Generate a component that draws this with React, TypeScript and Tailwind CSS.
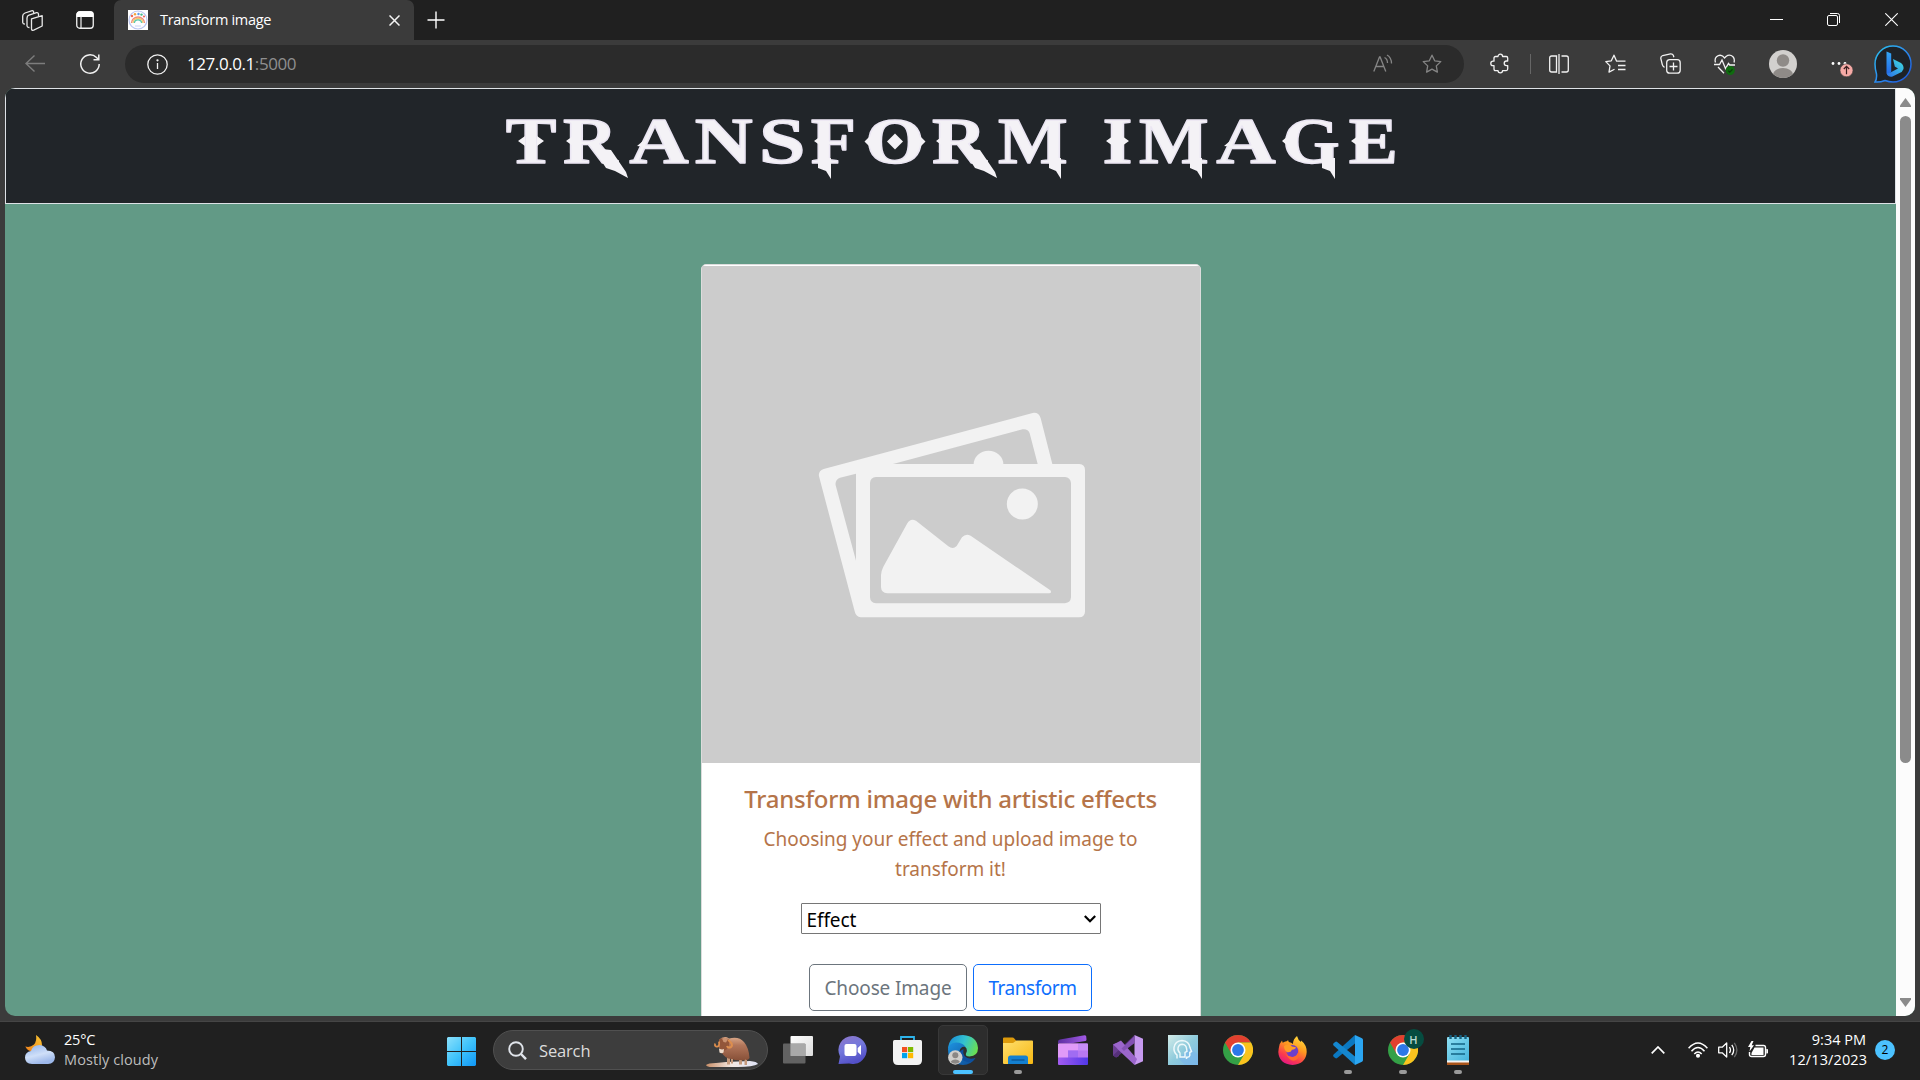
import React from "react";

const UI = "font-['Open_Sans','Noto_Sans',sans-serif]";

/* ---------- Title lettering ---------- */

// Horizontal ink bounds of each capital, in 1/1000 em.
const INK: Record<string, [number, number]> = {
  T: [31, 636],
  R: [26, 715],
  A: [9, 689],
  N: [16, 701],
  S: [35, 514],
  F: [16, 583],
  O: [35, 743],
  M: [14, 921],
  I: [20, 370],
  G: [37, 755],
  E: [16, 641],
};

const LETTERS: [string, number, number][] = [
  ["T", 507, 553],
  ["R", 564, 616],
  ["A", 629, 685],
  ["N", 695, 750],
  ["S", 761, 801],
  ["F", 811, 853],
  ["O", 867, 921],
  ["R", 933, 985],
  ["M", 998, 1065],
  ["I", 1103, 1130],
  ["M", 1139, 1206],
  ["A", 1216, 1272],
  ["G", 1284, 1337],
  ["E", 1349, 1395],
];

function Wordmark() {
  const size = 65;
  return (
    <svg width="900" height="90" viewBox="500 105 900 90" className="block" role="img" aria-label="Transform image">
      <g fill="#f4f2f6" stroke="#ebe6f3" strokeWidth="1.300" strokeLinejoin="round">
        {LETTERS.map(([ch, x0, x1], i) => {
          const [a, b] = INK[ch];
          const sx = (x1 - x0) / (((b - a) * size) / 1000);
          const tx = x0 - (a * size * sx) / 1000;
          return (
            <text
              key={i}
              transform={`translate(${tx} 163.300) scale(${sx} 1)`}
              fontFamily="'Liberation Serif', serif"
              fontWeight="700"
              fontSize={size}
            >
              {ch}
            </text>
          );
        })}
      </g>
      <g fill="#f4f2f6">
        <path d="M517 141l7-5v10zM543 141l-7-5v10z" />
        <path d="M565 141l7-5v10zM935 141l7-5v10zM1350 141l7-5v10z" />
        <path d="M636 146l6-5 3 6zM1223 146l6-5 3 6z" />
        <path d="M592 148l13 20 9 3 13 7-2-6-15-22zM961 148l13 20 9 3 13 7-2-6-15-22z" />
        <path d="M813 141l7-5v10zM817 158h13v21l-5-8-8-3z" />
        <path d="M863.500 141.500l6-6v12zM924.500 141.500l-6-6v12z" />
        <path d="M886 141.500l8-8 8 8-8 8z" />
        <path d="M1048 158h12v21l-5-8-7-3zM1189 158h12v21l-5-8-7-3zM1321 158h13v21l-5-8-8-3z" />
        <path d="M1105 141l7-5v10zM1128 141l-7-5v10zM1281 141l7-6v12z" />
      </g>
    </svg>
  );
}

/* ---------- Browser chrome ---------- */

function TabStrip() {
  return (
    <div className="flex h-10 items-start bg-[#202020]">
      <div className="flex h-10 w-[114px] items-center rounded-br-[6px] pl-[22px]">
        <svg width="21" height="21" viewBox="0 0 21 21" fill="none" stroke="#e8e8e8" strokeWidth="1.3" strokeLinejoin="round">
          <path d="M9.500 8.800 20.200 5.700V16l-8.500 4.200q-2.200.6-2.200-1.500z" />
          <path d="M16.500 6V3.800q-.4-1.500-2-1.100L7 5.200Q5 6 5 8v8q.3 1.700 2.500 1.500" />
          <path d="M11.600 3V1.800Q11 .4 9.500.8L3 3Q.7 4 .7 6v6.500q.2 1.600 2.300 1.700" />
        </svg>
        <svg className="ml-[33px]" width="18" height="18" viewBox="0 0 18 18">
          <rect x=".75" y=".75" width="16.500" height="16.500" rx="3" fill="none" stroke="#f2f2f2" strokeWidth="1.300" />
          <path d="M.5 6V3.500A3 3 0 0 1 3.500.5h11a3 3 0 0 1 3 3V6z" fill="#fff" />
          <path d="M5 5v12" stroke="#f2f2f2" strokeWidth="1.200" />
        </svg>
      </div>
      <div className="flex h-10 w-[300px] items-center rounded-t-[7px] bg-[#3b3b3b] pl-[14px] pr-[14px]">
        <svg width="20" height="20" viewBox="0 0 20 20">
          <rect width="20" height="20" fill="#fff" />
          <circle cx="10" cy="10" r="9" fill="#fdfdff" stroke="#b9c4f0" strokeWidth="1.200" />
          <path d="M3.500 13a6.500 6 0 0 1 13 0" fill="none" stroke="#f08a7c" strokeWidth="1.400" />
          <path d="M5 13a5 4.500 0 0 1 10 0" fill="none" stroke="#f5c86a" strokeWidth="1.300" />
          <path d="M6.400 13a3.600 3.200 0 0 1 7.200 0" fill="none" stroke="#58c7ae" strokeWidth="1.300" />
          <circle cx="4" cy="6" r="1.200" fill="#f0674f" />
          <circle cx="7" cy="4.300" r="1.200" fill="#f3a43c" />
          <circle cx="10.500" cy="4" r="1.200" fill="#5b9bea" />
          <circle cx="13.500" cy="4.600" r="1.200" fill="#48bd8a" />
          <circle cx="16" cy="6.500" r="1.100" fill="#ef6a5a" />
          <path d="M7 16h6" stroke="#c9d2f2" />
        </svg>
        <span className="ml-[12px] text-[14.500px] leading-5 tracking-[-0.300px] text-white">Transform image</span>
        <svg className="ml-auto" width="11" height="11" viewBox="0 0 11 11" stroke="#f4f4f4" strokeWidth="1.500">
          <path d="M.5.500l10 10M10.500.500l-10 10" />
        </svg>
      </div>
      <div className="flex h-10 items-center pb-px pl-[13px]">
        <svg width="18" height="18" viewBox="0 0 18 18" stroke="#fff" strokeWidth="1.400">
          <path d="M9 .500v17M.500 9h17" />
        </svg>
      </div>
      <div className="ml-auto flex h-10 items-center pr-[22px] pb-px">
        <svg width="13" height="13" viewBox="0 0 13 13" stroke="#fff">
          <path d="M0 6.500h13" />
        </svg>
        <svg className="ml-[44px]" width="13" height="13" viewBox="0 0 13 13" fill="none" stroke="#fff">
          <rect x=".5" y="2.500" width="10" height="10" rx="1.500" />
          <path d="M3 .500h7.500q2 0 2 2V10" />
        </svg>
        <svg className="ml-[45px]" width="13" height="13" viewBox="0 0 13 13" stroke="#fff" strokeWidth="1.100">
          <path d="M.3.300l12.400 12.400M12.700.300.3 12.700" />
        </svg>
      </div>
    </div>
  );
}

const STAR = "M10 1.200l2.700 5.600 6.100.8-4.500 4.300 1.100 6.200L10 15.100l-5.400 3 1.100-6.200L1.200 7.600l6.100-.8z";

function Toolbar() {
  return (
    <div className="flex h-12 items-center bg-[#3b3b3b]">
      <div className="flex w-[125px] items-center pl-[25px]">
        <svg width="20" height="18" viewBox="0 0 20 18" fill="none" stroke="#7d7d7d" strokeWidth="1.400">
          <path d="M20 8.500H1M9.500.500 1 8.500l8.500 8" />
        </svg>
        <svg className="ml-[35px]" width="20" height="20" viewBox="0 0 20 20" fill="none" stroke="#f2f2f2" strokeWidth="1.500">
          <path d="M19.200 10A9.200 9.200 0 1 1 16.500 3.500L18.500 5.500" />
          <path d="M18.800.500V5.700H13.500" />
        </svg>
      </div>
      <div className="flex h-[38px] w-[1339px] items-center rounded-full bg-[#2b2b2b] pl-[22px] pr-[22px]">
        <svg width="21" height="21" viewBox="0 0 21 21" fill="none" stroke="#f2f2f2" strokeWidth="1.300">
          <circle cx="10.500" cy="10.500" r="9.700" />
          <path d="M10.500 9v6" />
          <circle cx="10.500" cy="6.300" r=".5" fill="#fff" />
        </svg>
        <span className="ml-[19px] text-[17px] leading-6 tracking-[-0.430px] text-white">
          127.0.0.1<span className="text-[#8f8f8f]">:5000</span>
        </span>
        <svg className="mb-0.5 ml-auto" width="20" height="19" viewBox="0 0 20 19" fill="none" stroke="#858585" strokeWidth="1.300">
          <path d="M.8 17.500 6.500 3h.6l5.700 14.500M3 12.500h7.700" />
          <path d="M11.500 3.500q3 1.500 3 5.500M14 1q4.500 2.500 4.500 8.500" />
        </svg>
        <svg className="ml-[29px]" width="20" height="20" viewBox="0 0 20 20" fill="none" stroke="#858585" strokeWidth="1.300" strokeLinejoin="round">
          <path d={STAR} />
        </svg>
      </div>
      <div className="ml-2 flex items-center">
        <div className="flex w-14 justify-center pb-px">
          <svg width="20" height="21" viewBox="0 0 20 21" fill="none" stroke="#f2f2f2" strokeWidth="1.300" strokeLinejoin="round">
            <path d="M8 3.500a2.300 2.300 0 0 1 4.600 0h3.600q1.500 0 1.500 1.500v3h-1.200a2.300 2.300 0 0 0 0 4.600h1.200v3.500q0 1.500-1.500 1.500h-3.600a2.300 2.300 0 0 1-4.600 0H5.500Q4 17.600 4 16.100V12.600H3a2.200 2.200 0 0 1 0-4.400h1V5q0-1.500 1.500-1.500z" />
          </svg>
        </div>
        <div className="flex w-1 justify-center">
          <div className="h-5 w-px bg-[#666]" />
        </div>
        <div className="flex w-[54px] justify-center pb-px">
          <svg width="20" height="20" viewBox="0 0 20 20" fill="none" stroke="#f2f2f2" strokeWidth="1.300">
            <path d="M7.500 2H2.700Q.7 2 .7 4v12q0 2 2 2h4.800zM12.500 2h4.800q2 0 2 2v12q0 2-2 2h-4.800M10 0v20" />
          </svg>
        </div>
        <div className="flex w-[58px] justify-center pb-px">
          <svg width="21" height="20" viewBox="0 0 21 20" fill="none" stroke="#f2f2f2" strokeWidth="1.300" strokeLinejoin="round">
            <path d="M13 7.200 11.500 7 9 1.200 6.300 6.800.8 7.600l4.200 4.300-1 6.200L9.500 15.200M13 7.200h7.500M13 11.500h7.500M13 15.500h7.500" />
          </svg>
        </div>
        <div className="flex w-[52px] justify-center pb-px">
          <svg width="21" height="21" viewBox="0 0 21 21" fill="none" stroke="#f2f2f2" strokeWidth="1.300">
            <rect x="6.700" y="6.700" width="13.500" height="13.500" rx="3" />
            <path d="M13.500 9.500v8M9.500 13.500h8M4.500 14.300Q2.700 13.500 2.300 11.700L.8 5.500Q.6 3.300 2.700 2.500L10.500.800q2-.2 2.800 1.500l.6 1.900" />
          </svg>
        </div>
        <div className="flex w-[58px] justify-center">
          <svg width="22" height="21" viewBox="0 0 22 21" fill="none" stroke="#f2f2f2" strokeWidth="1.300">
            <path d="M1.500 8.500Q.3 5 2.500 2.800 6-.2 9.300 2.600L10.500 4 12 2.500q3.700-2.800 7 .3Q21 5 20 8.500M4 13l6 6.300" />
            <path d="M0 10.500h5.500L8 6l3.500 8.500 3-5 1.200 1.500H21" />
            <circle cx="16.300" cy="16.500" r="4.500" fill="#0f6b0f" stroke="none" />
            <path d="M14.300 16.600l1.500 1.500 2.700-2.800" stroke="#0a3d0a" />
          </svg>
        </div>
        <div className="flex w-[58px] justify-center">
          <svg width="28" height="28" viewBox="0 0 28 28">
            <defs>
              <clipPath id="avatarClip">
                <circle cx="14" cy="14" r="14" />
              </clipPath>
            </defs>
            <g clipPath="url(#avatarClip)">
              <rect width="28" height="28" fill="#d2d0ce" />
              <circle cx="14" cy="10.500" r="6.200" fill="#8f8b88" />
              <ellipse cx="14" cy="24.500" rx="10" ry="6.500" fill="#8f8b88" />
            </g>
          </svg>
        </div>
        <div className="flex w-[54px] justify-center">
          <svg width="27" height="26" viewBox="0 0 27 26">
            <g fill="#fff">
              <circle cx="7" cy="12.500" r="1.400" />
              <circle cx="13" cy="12.500" r="1.400" />
              <circle cx="19" cy="12.500" r="1.400" />
            </g>
            <circle cx="20" cy="19.500" r="6.500" transform="translate(.5 -.2)" fill="#f6aaa6" stroke="#3b3b3b" strokeWidth=".6" />
            <path d="M20.500 23.300v-8M17.800 18l2.700-2.700L23.200 18" stroke="#3b1f1f" fill="none" strokeWidth="1.200" />
          </svg>
        </div>
        <div className="flex w-[54px] justify-center">
          <svg width="38" height="38" viewBox="0 0 38 38">
            <defs>
              <linearGradient id="bingRing" x1="0" y1="0" x2="1" y2="1">
                <stop offset="0" stopColor="#2bc4ee" />
                <stop offset=".5" stopColor="#2b8cf0" />
                <stop offset="1" stopColor="#1b4fd8" />
              </linearGradient>
              <linearGradient id="bingB" x1="0" y1="0" x2="0" y2="1">
                <stop offset="0" stopColor="#34a6f4" />
                <stop offset="1" stopColor="#2267e6" />
              </linearGradient>
              <linearGradient id="bingS" x1="0" y1="1" x2="1" y2="0">
                <stop offset="0" stopColor="#2b6fe8" />
                <stop offset="1" stopColor="#3fe0e0" />
              </linearGradient>
            </defs>
            <path d="M1 37q2-3 1.500-8Q1 24 1 19A18 18 0 1 1 19 37q-4 0-8-1.500Q6 37.500 1 37z" fill="#1e2227" stroke="url(#bingRing)" strokeWidth="1.500" />
            <path d="M12.500 6.500l4.700 2v17.700l-2 4.500-2.700-2.500z" fill="url(#bingB)" />
            <path d="M19 14l8 4q3 2.300 2.500 6-1 3-4 4l-7 3.500q-4 1-6-3l3-.5 8.500-4.500-3.200-2z" fill="url(#bingS)" />
          </svg>
        </div>
      </div>
    </div>
  );
}

/* ---------- Page ---------- */

function PlaceholderPicture() {
  return (
    <svg className="block" width="498" height="497" viewBox="36 48 1494 1491">
      <rect x="36" y="48" width="1494" height="1491" fill="#ccc" />
      <g fill="#f2f2f2">
        <path
          fillRule="evenodd"
          d="M401 657 1028 489Q1046 486 1052 505L1087 642H1168Q1185 643 1185 660V1085Q1184 1101 1168 1102H512Q498 1101 494 1084L387 679Q384 663 401 657zM609 642H1043L1019 550Q1014 536 998 538zM498 671 450 683Q434 690 437 706L498 932zM558 681Q541 682 540 699V1042Q541 1059 558 1060H1125Q1142 1058 1143 1042V699Q1141 682 1125 681z"
        />
        <path d="M851 643a44 40 0 0 1 89 0z" />
        <circle cx="997" cy="762" r="46.500" />
        <path d="M652 820Q661 804 678 812L775 889Q789 899 800 888L816 862Q827 849 842 857L1081 1021Q1086 1028 1078 1030H592Q574 1029 573 1012V975Q574 962 580 950z" />
      </g>
    </svg>
  );
}

function Page() {
  return (
    <div className="mx-[5px] flex h-[928px] overflow-hidden rounded-[10px] bg-[#629a86]">
      <div className="flex w-[1891px] flex-col items-center">
        <header className="flex h-[116px] w-full shrink-0 justify-center border border-[#dee2e6] bg-[#212529] pt-4">
          <Wordmark />
        </header>
        <main className="mt-[60px] flex w-[500px] shrink-0 flex-col rounded-[5px] border border-[#dcdcdc] bg-white pt-px font-['Noto_Sans','Open_Sans',sans-serif]">
          <PlaceholderPicture />
          <div className="flex flex-col items-center pt-[21px] pb-10">
            <h5 className="whitespace-nowrap text-[24px] font-medium leading-[30px] tracking-[-0.230px] text-[#b57449]">
              Transform image with artistic effects
            </h5>
            <p className="mt-[10px] whitespace-nowrap text-center text-[19px] leading-[30px] tracking-[-0.040px] text-[#b57449]">
              Choosing your effect and upload image to
              <br />
              transform it!
            </p>
            <div className="mt-[19px] flex h-[31px] w-[300px] items-center justify-between rounded-[1px] border border-[#767676] bg-white pl-[5px] pr-[4px]">
              <span className="pt-0.5 text-[19px] leading-7 tracking-[-0.100px] text-black">Effect</span>
              <svg width="12" height="8" viewBox="0 0 12 8" fill="none" stroke="#000" strokeWidth="2.200">
                <path d="M.8 1 6 6.200 11.200 1" />
              </svg>
            </div>
            <div className="mt-[30px] flex gap-[6px] text-[19px] leading-7">
              <button className="h-[47px] w-[158px] whitespace-nowrap rounded-[5px] border border-[#6c757d] tracking-[-0.150px] text-[#6c757d]">
                Choose Image
              </button>
              <button className="h-[47px] w-[119px] whitespace-nowrap rounded-[5px] border border-[#0d6efd] tracking-[-0.450px] text-[#0d6efd]">
                Transform
              </button>
            </div>
          </div>
        </main>
      </div>
      <div className="flex w-[19px] flex-col items-center bg-[#fcfcfc] pt-[10px] pb-[9px]">
        <svg width="11" height="9" viewBox="0 0 11 9">
          <path d="M5.500 0 11 7.500V9H0V7.500z" fill="#8b8b8b" />
        </svg>
        <div className="mt-[9px] h-[647px] w-[11px] rounded-full bg-[#8b8b8b]" />
        <svg className="mt-auto" width="11" height="9" viewBox="0 0 11 9">
          <path d="M5.500 9 11 1.500V0H0v1.500z" fill="#8b8b8b" />
        </svg>
      </div>
    </div>
  );
}

/* ---------- Taskbar icons ---------- */

function Chrome() {
  return (
    <svg width="30" height="30" viewBox="0 0 30 30">
      <circle cx="15" cy="15" r="15" fill="#34a046" />
      <path d="M15 0a15 15 0 0 1 13 7.500H15L8.500 18.800 2 7.500A15 15 0 0 1 15 0z" fill="#e2402f" />
      <path d="M28 7.500A15 15 0 0 1 15 30l6.500-11.200L15 7.500z" fill="#fbc31e" />
      <circle cx="15" cy="15" r="7.500" fill="#fff" />
      <circle cx="15" cy="15" r="5.900" fill="#2c78e8" />
    </svg>
  );
}

function Edge() {
  return (
    <svg width="30" height="30" viewBox="0 0 30 30">
      <defs>
        <linearGradient id="edgeTop" x1="0" y1=".3" x2="1" y2=".6">
          <stop offset="0" stopColor="#1b8fd8" />
          <stop offset=".5" stopColor="#33c2d0" />
          <stop offset="1" stopColor="#6be04f" />
        </linearGradient>
        <linearGradient id="edgeLow" x1="0" y1="0" x2="1" y2="1">
          <stop offset="0" stopColor="#1e93e0" />
          <stop offset="1" stopColor="#0c4a94" />
        </linearGradient>
      </defs>
      <path d="M0 14Q1 0 15 0q14 1 15 13 0 8-8.500 8.500-4.500 0-3.500-3 3-6-4-8.500Q5 8 0 14z" fill="url(#edgeTop)" />
      <path d="M0 14q1-6 8-6.500 7 0 9.500 4.500-5-1-6 4.500Q11 25 20 26q4 0 7.500-3Q23 30 15 30 0 29 0 14z" fill="url(#edgeLow)" />
      <path d="M11.500 16.500Q11 26 20 27q4 0 7.500-4Q20 25 16.500 21q-2-3-1-7z" fill="#0d4f9e" />
      <circle cx="7.300" cy="22.500" r="7.200" fill="#d0cecb" />
      <circle cx="7.300" cy="20.300" r="3" fill="#8b8784" />
      <path d="M2.700 27a4.800 3.600 0 0 1 9.200 0 7 7 0 0 1-9.200 0z" fill="#8b8784" />
    </svg>
  );
}

const APPS: { name: string; running?: "active" | "idle"; icon: React.ReactNode }[] = [
  {
    name: "Task view",
    icon: (
      <svg width="30" height="28" viewBox="0 0 30 28">
        <defs>
          <linearGradient id="tv" x1="0" y1="0" x2="1" y2="1">
            <stop offset="0" stopColor="#fff" />
            <stop offset="1" stopColor="#dcdcdc" />
          </linearGradient>
        </defs>
        <rect x="7.500" width="22.500" height="20" rx="1" fill="url(#tv)" />
        <rect y="7.500" width="22.500" height="20" rx="1" fill="#6e6e6e" opacity=".85" />
        <path d="M7.500 8h15v12h-15z" fill="#a9a9a9" />
      </svg>
    ),
  },
  {
    name: "Chat",
    icon: (
      <svg width="29" height="28" viewBox="0 0 29 28">
        <defs>
          <linearGradient id="chat" x1="0" y1="0" x2=".4" y2="1">
            <stop offset="0" stopColor="#8f76c8" />
            <stop offset=".5" stopColor="#7478dc" />
            <stop offset="1" stopColor="#5350c8" />
          </linearGradient>
        </defs>
        <path d="M14.500 0a14 14 0 1 1-3.500 27.500L.5 28 2 20.500A14 14 0 0 1 14.500 0z" fill="url(#chat)" />
        <rect x="6.500" y="8" width="12" height="12" rx="2" fill="#fff" />
        <path d="M19.700 12 23 9v10l-3.300-3z" fill="#fff" />
      </svg>
    ),
  },
  {
    name: "Store",
    icon: (
      <svg width="29" height="29" viewBox="0 0 29 29">
        <path d="M8 6V1h13v5" fill="none" stroke="#2db4ec" strokeWidth="1.800" />
        <path d="M0 5.500Q0 4 1.500 4h26Q29 4 29 5.500V24q0 5-5 5H5q-5 0-5-5z" fill="#f3f3f3" />
        <path d="M9 11h5.200v5.200H9z" fill="#f25022" />
        <path d="M15 11h5.200v5.200H15z" fill="#7fba00" />
        <path d="M9 17h5.200v5.200H9z" fill="#00a4ef" />
        <path d="M15 17h5.200v5.200H15z" fill="#ffb900" />
      </svg>
    ),
  },
  { name: "Edge", running: "active", icon: <Edge /> },
  {
    name: "Explorer",
    running: "idle",
    icon: (
      <svg width="30" height="27" viewBox="0 0 30 27">
        <defs>
          <linearGradient id="fold" x1="0" y1="0" x2="1" y2="1">
            <stop offset="0" stopColor="#ffdf6e" />
            <stop offset="1" stopColor="#f7b813" />
          </linearGradient>
        </defs>
        <path d="M0 1.500Q0 .500 1 .500h8.500q1 0 2 1.200L13.500 4v5H0z" fill="#dd9a0b" />
        <path d="M0 6h10l3.500-2.500H29q1 0 1 1V26q0 1-1 1H1q-1 0-1-1z" fill="url(#fold)" />
        <path d="M5 27v-6q0-2.500 2.500-2.500h15Q25 18.500 25 21v6z" fill="#1480d0" />
        <path d="M8.500 23h13" stroke="#0b4f8e" strokeWidth="1.200" />
      </svg>
    ),
  },
  {
    name: "Clipchamp",
    icon: (
      <svg width="30" height="30" viewBox="0 0 30 30">
        <defs>
          <linearGradient id="clip1" x1="0" y1="0" x2="1" y2="0">
            <stop offset="0" stopColor="#5c2fa0" />
            <stop offset="1" stopColor="#a25ae6" />
          </linearGradient>
          <linearGradient id="clip2" x1="0" y1="0" x2="1" y2="0">
            <stop offset="0" stopColor="#a45cf0" />
            <stop offset="1" stopColor="#5138e8" />
          </linearGradient>
        </defs>
        <path d="M0 8V6.500Q0 5 2 4.500L26.500.200q1.500 0 1.700 1.300l.3 3q0 1.200-1 1.500L12 8.500z" fill="url(#clip1)" />
        <path d="M1 8.500h28q1 0 1 1V23H0V9.500q0-1 1-1z" fill="#b878f2" />
        <path d="M0 9.500q0-1 1-1h19v7H10V23H0z" fill="#e09af8" />
        <path d="M10 15.500h10V23H10z" fill="#a06cf2" />
        <path d="M20 8.500h9q1 0 1 1v6H20z" fill="#c68cf6" />
        <path d="M0 22.500h30V29q0 1-1 1H1q-1 0-1-1z" fill="url(#clip2)" />
      </svg>
    ),
  },
  {
    name: "Visual Studio",
    icon: (
      <svg width="30" height="30" viewBox="0 0 30 30">
        <path d="M0 9.500 3.200 8 6 10v11L3 22.500 0 20.500z" fill="#6b3f93" />
        <path d="M3.300 22.500 0 20.500 21.500 0v8z" fill="#56307a" />
        <path d="M21.500 0 30 3.800v22.400L21.500 30z" fill="#c79af0" />
        <path d="M0 9.500 3.200 8 8 5.500 24 24l-2.500 6L5.500 15 3.300 12.500z" fill="#9b66cc" />
        <path d="M12.300 14.800 21.500 8V1L8.500 13.500 11 16z" fill="#8352b4" />
      </svg>
    ),
  },
  {
    name: "Assistant",
    icon: (
      <svg width="30" height="30" viewBox="0 0 30 30">
        <defs>
          <linearGradient id="head" x1="0" y1="0" x2="1" y2="1">
            <stop offset="0" stopColor="#d3ece9" />
            <stop offset=".5" stopColor="#8fcbdc" />
            <stop offset="1" stopColor="#79b8e6" />
          </linearGradient>
        </defs>
        <rect width="30" height="30" fill="url(#head)" />
        <path d="M11 24 17 30h13V20l-8-8z" fill="#7cb8ea" opacity=".7" />
        <path d="M9 23.500V20Q5.500 17 6 12.500 7 6 14 5.500q7 .5 8 7l1.500 4-1.700 1v3q-.3 2-3.300 1.700V24" fill="none" stroke="#eef9fb" strokeWidth="1.500" />
        <path d="M12 22v-4q-2.500-2-2-5 .8-3.600 4.300-3.700 3.700.5 4.200 4l.5 3-2 1.200V22z" fill="none" stroke="#eef9fb" strokeWidth="1.400" />
      </svg>
    ),
  },
  { name: "Chrome", icon: <Chrome /> },
  {
    name: "Firefox",
    icon: (
      <svg width="29" height="29" viewBox="0 0 29 29">
        <defs>
          <linearGradient id="fox" x1=".8" y1="0" x2=".3" y2="1">
            <stop offset="0" stopColor="#ffe13f" />
            <stop offset=".4" stopColor="#ff9a1f" />
            <stop offset=".75" stopColor="#fb3b4c" />
            <stop offset="1" stopColor="#e21587" />
          </linearGradient>
        </defs>
        <path d="M.8 12Q1.500 7 4 4.500l.7 2.300Q7 5 9 5.300L10 4l.8 2q2.700.7 4.200 2Q15 3 19 0q1 4 4 6l.2-1.500Q28.800 9 28.700 16 28 28 14.500 29 1 28 .3 16z" fill="url(#fox)" />
        <circle cx="14.300" cy="15" r="6" fill="#6d3fc9" />
        <path d="M6 10q5-3 8 .5l4 .8q-.5 2-4 2.500-1 3-5 2.500Q6 14 6 10z" fill="#ff9d24" />
        <path d="M7.500 18q4 4 8.500 2.700 6-2.700 3.500-8.700 4 6 0 11-6 5-12-5z" fill="#ff6a2c" />
      </svg>
    ),
  },
  {
    name: "VS Code",
    running: "idle",
    icon: (
      <svg width="30" height="30" viewBox="0 0 30 30">
        <path d="M22 0 .600 19.500q-1 1 0 2.200l1.600 1.400q1 .7 2 0L22 8.500z" fill="#0b78c0" />
        <path d="M22 30 .6 10.500q-1-1 0-2.200L2.200 6.900q1-.7 2 0L22 21.500z" fill="#1587cf" />
        <path d="M22 0l7 3.200q1 .5 1 1.700v20.200q0 1.200-1 1.700L22 30z" fill="#2ba6f2" />
      </svg>
    ),
  },
  {
    name: "Chrome profile",
    running: "idle",
    icon: (
      <div className="relative">
        <Chrome />
        <div className="absolute -top-[6px] left-[16px] flex size-5 items-center justify-center rounded-full bg-[#064c40] text-[11px] font-semibold leading-none text-[#b9d8d0]">
          H
        </div>
      </div>
    ),
  },
  {
    name: "Notepad",
    running: "idle",
    icon: (
      <svg width="22" height="30" viewBox="0 0 22 30">
        <defs>
          <linearGradient id="note" x1="0" y1="0" x2="1" y2="1">
            <stop offset="0" stopColor="#8fe0f4" />
            <stop offset="1" stopColor="#45b4dc" />
          </linearGradient>
        </defs>
        <path d="M0 25h22v5H0z" fill="#a9551b" />
        <path d="M0 24h22v3.500H0z" fill="#f5f5f5" />
        <path d="M0 3Q0 2 1 2h20q1 0 1 1v22.500H0z" fill="url(#note)" />
        <path d="M3.500 0v4M8.500 0v4M13.500 0v4M18.500 0v4" stroke="#16607f" strokeWidth="2.400" />
        <path d="M4 9h14M4 14h14M4 19h14" stroke="#136485" strokeWidth="1.600" />
      </svg>
    ),
  },
];

function Ox() {
  return (
    <svg width="52" height="32" viewBox="0 0 52 32">
      <defs>
        <linearGradient id="snow" x1="0" y1="0" x2="1" y2="0">
          <stop offset="0" stopColor="#c98f68" />
          <stop offset=".5" stopColor="#f3e9e4" />
          <stop offset="1" stopColor="#dfe3f6" />
        </linearGradient>
        <linearGradient id="fur" x1="0" y1="0" x2="0" y2="1">
          <stop offset="0" stopColor="#dba98a" />
          <stop offset=".35" stopColor="#b2765a" />
          <stop offset="1" stopColor="#875038" />
        </linearGradient>
      </defs>
      <path d="M0 29q2-2 10-2l10-1 24-1q7 .5 8 3-5 3-20 3L6 31q-5 0-6-2z" fill="url(#snow)" />
      <path d="M21 20h3v8.500h-3zM25 20h2v7.500h-2zM33 20h3v8.500h-3zM38.500 20h2.500v9h-2.500z" fill="#c69a7c" />
      <path d="M13 4Q18-1 23 2.500q10-2.500 15 3.500 5 6 5.500 16-2 3-4 1.500-3 1.500-5 .5-5 1-8-1-4 .5-7-2-4-3-6.500-10z" fill="url(#fur)" />
      <path d="M13 3.500q5-3.500 10 0 1.500 6-2.500 10-5 4-6.500-1z" fill="#93563a" />
      <path d="M16 2.500q3-1.500 6 .5l-2 3.500-2.500-.5z" fill="#c99272" />
      <path d="M13 12.500q3 1.500 5 .5l-.5 3.500q-2 1.500-4 0z" fill="#f0dccb" />
      <path d="M13 5.500q1 6-3 5-1.500-1-1-3" fill="none" stroke="#dd8e4e" strokeWidth="1.800" />
      <path d="M22 4q6 4 3 7-3 1.500-4-1" fill="none" stroke="#dd8e4e" strokeWidth="2" />
    </svg>
  );
}

function Taskbar() {
  return (
    <div className="flex h-[59px] border-t border-[#454545] bg-[#202020]">
      <div className="flex w-[447px] items-center gap-[9px] pb-0.5 pl-[25px]">
        <svg width="30" height="30" viewBox="0 0 30 30">
          <defs>
            <linearGradient id="moon" x1="1" y1="0" x2="0" y2="1">
              <stop offset="0" stopColor="#fbc934" />
              <stop offset="1" stopColor="#ef7f1b" />
            </linearGradient>
            <linearGradient id="cloud" x1="0" y1="0" x2=".4" y2="1">
              <stop offset="0" stopColor="#8fb2ec" />
              <stop offset=".6" stopColor="#cfdff8" />
              <stop offset="1" stopColor="#9db8ea" />
            </linearGradient>
          </defs>
          <path d="M11 0q6 4 6 10-1 6-8 6.500Q3 17 .3 11.500 5 13 9 9.500 12 6 11 0z" fill="url(#moon)" />
          <path d="M7 29q-7-.5-7-6.500 0-5.500 6-6.500 1.500-6 8.500-6 6 .5 7.500 5.500 8 0 8 6.800Q29.500 29 23 29z" fill="url(#cloud)" />
        </svg>
        <div className="text-[14.500px] leading-5">
          <div className="tracking-[-0.200px] text-white">25°C</div>
          <div className="tracking-[0.100px] text-[#bdbdbd]">Mostly cloudy</div>
        </div>
      </div>
      <div className="flex w-[46px] items-center">
        <svg width="29" height="29" viewBox="0 0 29 29">
          <defs>
            <linearGradient id="win" x1="0" y1="0" x2="1" y2="1">
              <stop offset="0" stopColor="#8be0fb" />
              <stop offset=".5" stopColor="#3fc3fb" />
              <stop offset="1" stopColor="#0f96f6" />
            </linearGradient>
          </defs>
          <path d="M1 0h13v14H0V1zM15 0h13l1 1v13H15zM0 15h14v14H1l-1-1zM15 15h14v13l-1 1H15z" fill="url(#win)" />
        </svg>
      </div>
      <div className="mt-2 flex h-10 w-[275px] items-center rounded-full border border-[#505050] bg-[#3d3d3d] pl-[14px] pr-[9px]">
        <svg width="19" height="19" viewBox="0 0 19 19" fill="none" stroke="#e0e4ea" strokeWidth="1.900">
          <circle cx="8" cy="8" r="6.800" />
          <path d="M13 13l5 5.200" strokeWidth="2.400" />
        </svg>
        <span className="ml-[12px] pt-0.5 text-[16.500px] leading-6 tracking-[-0.150px] text-[#dcdcdc]">Search</span>
        <span className="ml-auto mt-1">
          <Ox />
        </span>
      </div>
      <div className="ml-[2px] flex">
        {APPS.map((app) => (
          <div key={app.name} className="flex w-[55px] justify-center pt-[3px]">
            <div
              className={
                app.running === "active"
                  ? "relative flex size-[50px] items-center justify-center rounded-[5px] border border-[#383838] bg-[#2d2d2d]"
                  : "relative flex size-[50px] items-center justify-center"
              }
            >
              {app.icon}
              {app.running === "active" && <div className="absolute bottom-0 h-1 w-5 rounded-full bg-[#4cc2ff]" />}
              {app.running === "idle" && <div className="absolute bottom-px h-1 w-2 rounded-full bg-[#9a9a9a]" />}
            </div>
          </div>
        ))}
      </div>
      <div className="ml-auto flex items-center pr-[25px] pb-0.5">
        <svg width="14" height="8" viewBox="0 0 14 8" fill="none" stroke="#fff" strokeWidth="1.700">
          <path d="M.7 7.300 7 1l6.300 6.300" />
        </svg>
        <svg className="ml-[23px]" width="20" height="16" viewBox="0 0 20 16" fill="none" stroke="#fff" strokeWidth="1.500">
          <path d="M.6 6.300q9.400-10.600 18.800 0M3.500 9.200q6.500-7.400 13 0M6.300 12q3.700-4.200 7.400 0" />
          <circle cx="10" cy="13.800" r="1.300" fill="#fff" />
        </svg>
        <svg className="ml-[10px]" width="20" height="18" viewBox="0 0 20 18" fill="none" stroke="#fff" strokeWidth="1.300" strokeLinejoin="round">
          <path d="M.7 6.200h3.500L8.700 2v14l-4.500-4.200H.7z" />
          <path d="M11.500 6q2 3 0 6M13.800 3.800q3.800 5.200 0 10.400" />
          <path d="M16.300 1.800q5.200 7.200 0 14.400" stroke="#6a6a6a" />
        </svg>
        <svg className="ml-[10px]" width="20" height="18" viewBox="0 0 20 18">
          <path d="M7.500 4.500h8q2 0 2 2v7q0 2-2 2h-12q-2 0-2-2V11" fill="none" stroke="#fff" strokeWidth="1.400" />
          <path d="M6.500 6.500h9V14h-12v-2z" fill="#fff" />
          <path d="M18.300 8h1q.7 0 .7.700v3q0 .7-.7.700h-1z" fill="#fff" />
          <path d="M3.500 0 0 6h2.300L1.500 10.500 6 4.200H3.700L5.500 0z" fill="#fff" />
        </svg>
        <div className="ml-[21px] w-[77px] whitespace-nowrap text-right text-[14.500px] leading-5 text-white">
          <div>9:34 PM</div>
          <div className="tracking-[0.120px]">12/13/2023</div>
        </div>
        <div className="ml-[9px] flex size-5 items-center justify-center rounded-full bg-[#4cc2ff] text-[12px] leading-none text-black">
          2
        </div>
      </div>
    </div>
  );
}

export default function App() {
  return (
    <div className={`flex h-[1080px] w-[1920px] flex-col overflow-hidden bg-[#3b3b3b] ${UI}`}>
      <TabStrip />
      <Toolbar />
      <Page />
      <div className="h-[5px] shrink-0" />
      <Taskbar />
    </div>
  );
}
